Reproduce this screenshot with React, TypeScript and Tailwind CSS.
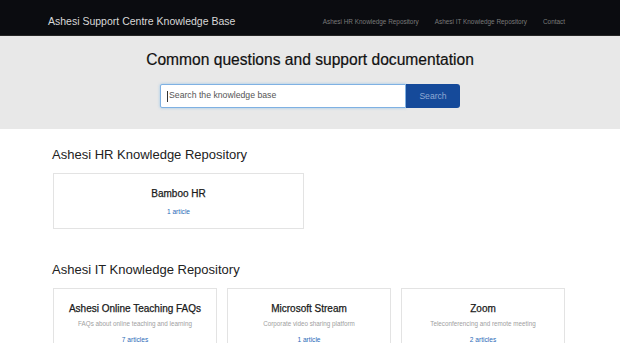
import React from "react";

const font = { fontFamily: '"Liberation Sans", Arial, sans-serif' };

function Card({ title, desc, count }: { title: string; desc?: string; count: string }) {
  return (
    <div className="border border-[#e3e3e3] bg-white flex flex-col items-center pt-[13px] pb-[12px]">
      <div className="text-[10px] leading-[14px] text-[#1a1a1a] [-webkit-text-stroke:0.25px_#1a1a1a]">
        {title}
      </div>
      {desc && <div className="text-[6.3px] leading-[10px] mt-[3px] text-[#a0a0a0]">{desc}</div>}
      <div className="text-[6.6px] leading-[8px] mt-[7px] text-[#2a6bb8]">{count}</div>
    </div>
  );
}

export default function App() {
  return (
    <div style={font} className="w-[620px] h-[343px] overflow-hidden bg-white">
      <nav className="h-[36px] bg-[#0b0c10] border-b border-[#262626] flex items-center px-[48px] pt-[9px] justify-between">
        <div className="text-[10.5px] text-[#d8d8d8]">Ashesi Support Centre Knowledge Base</div>
        <div className="flex items-center gap-[16px] text-[6.4px] text-[#7a7a7a] pr-[7px]">
          <span>Ashesi HR Knowledge Repository</span>
          <span>Ashesi IT Knowledge Repository</span>
          <span>Contact</span>
        </div>
      </nav>
      <section className="h-[93px] bg-[#e8e8e8] flex flex-col items-center pt-[13px]">
        <h1 className="text-[15.6px] leading-[22px] text-[#111] [-webkit-text-stroke:0.2px_#111]">
          Common questions and support documentation
        </h1>
        <div className="flex mt-[13px]">
          <div className="w-[246px] h-[24px] bg-white border border-[#7fb1e3] rounded-l-[2px] shadow-[0_0_3px_rgba(102,175,233,0.6)] flex items-center pl-[6px]">
            <span className="w-px h-[11px] bg-[#333] mr-[1px]" />
            <span className="text-[8.7px] text-[#555]">Search the knowledge base</span>
          </div>
          <div className="w-[54px] h-[24px] bg-[#154a9a] rounded-r-[3px] flex items-center justify-center text-[8.6px] text-[#8fa9d4]">
            Search
          </div>
        </div>
      </section>
      <main className="pl-[53px] pr-[55px] w-[620px]">
        <h2 className="text-[13px] leading-[18px] text-[#222] mt-[17px] ml-[-1px]">Ashesi HR Knowledge Repository</h2>
        <div className="grid grid-cols-2 gap-[10px] mt-[9px]">
          <Card title="Bamboo HR" count="1 article" />
        </div>
        <h2 className="text-[13px] leading-[18px] text-[#222] mt-[32px] ml-[-1px]">Ashesi IT Knowledge Repository</h2>
        <div className="grid grid-cols-3 gap-[10px] mt-[9px]">
          <Card title="Ashesi Online Teaching FAQs" desc="FAQs about online teaching and learning" count="7 articles" />
          <Card title="Microsoft Stream" desc="Corporate video sharing platform" count="1 article" />
          <Card title="Zoom" desc="Teleconferencing and remote meeting" count="2 articles" />
        </div>
      </main>
    </div>
  );
}
